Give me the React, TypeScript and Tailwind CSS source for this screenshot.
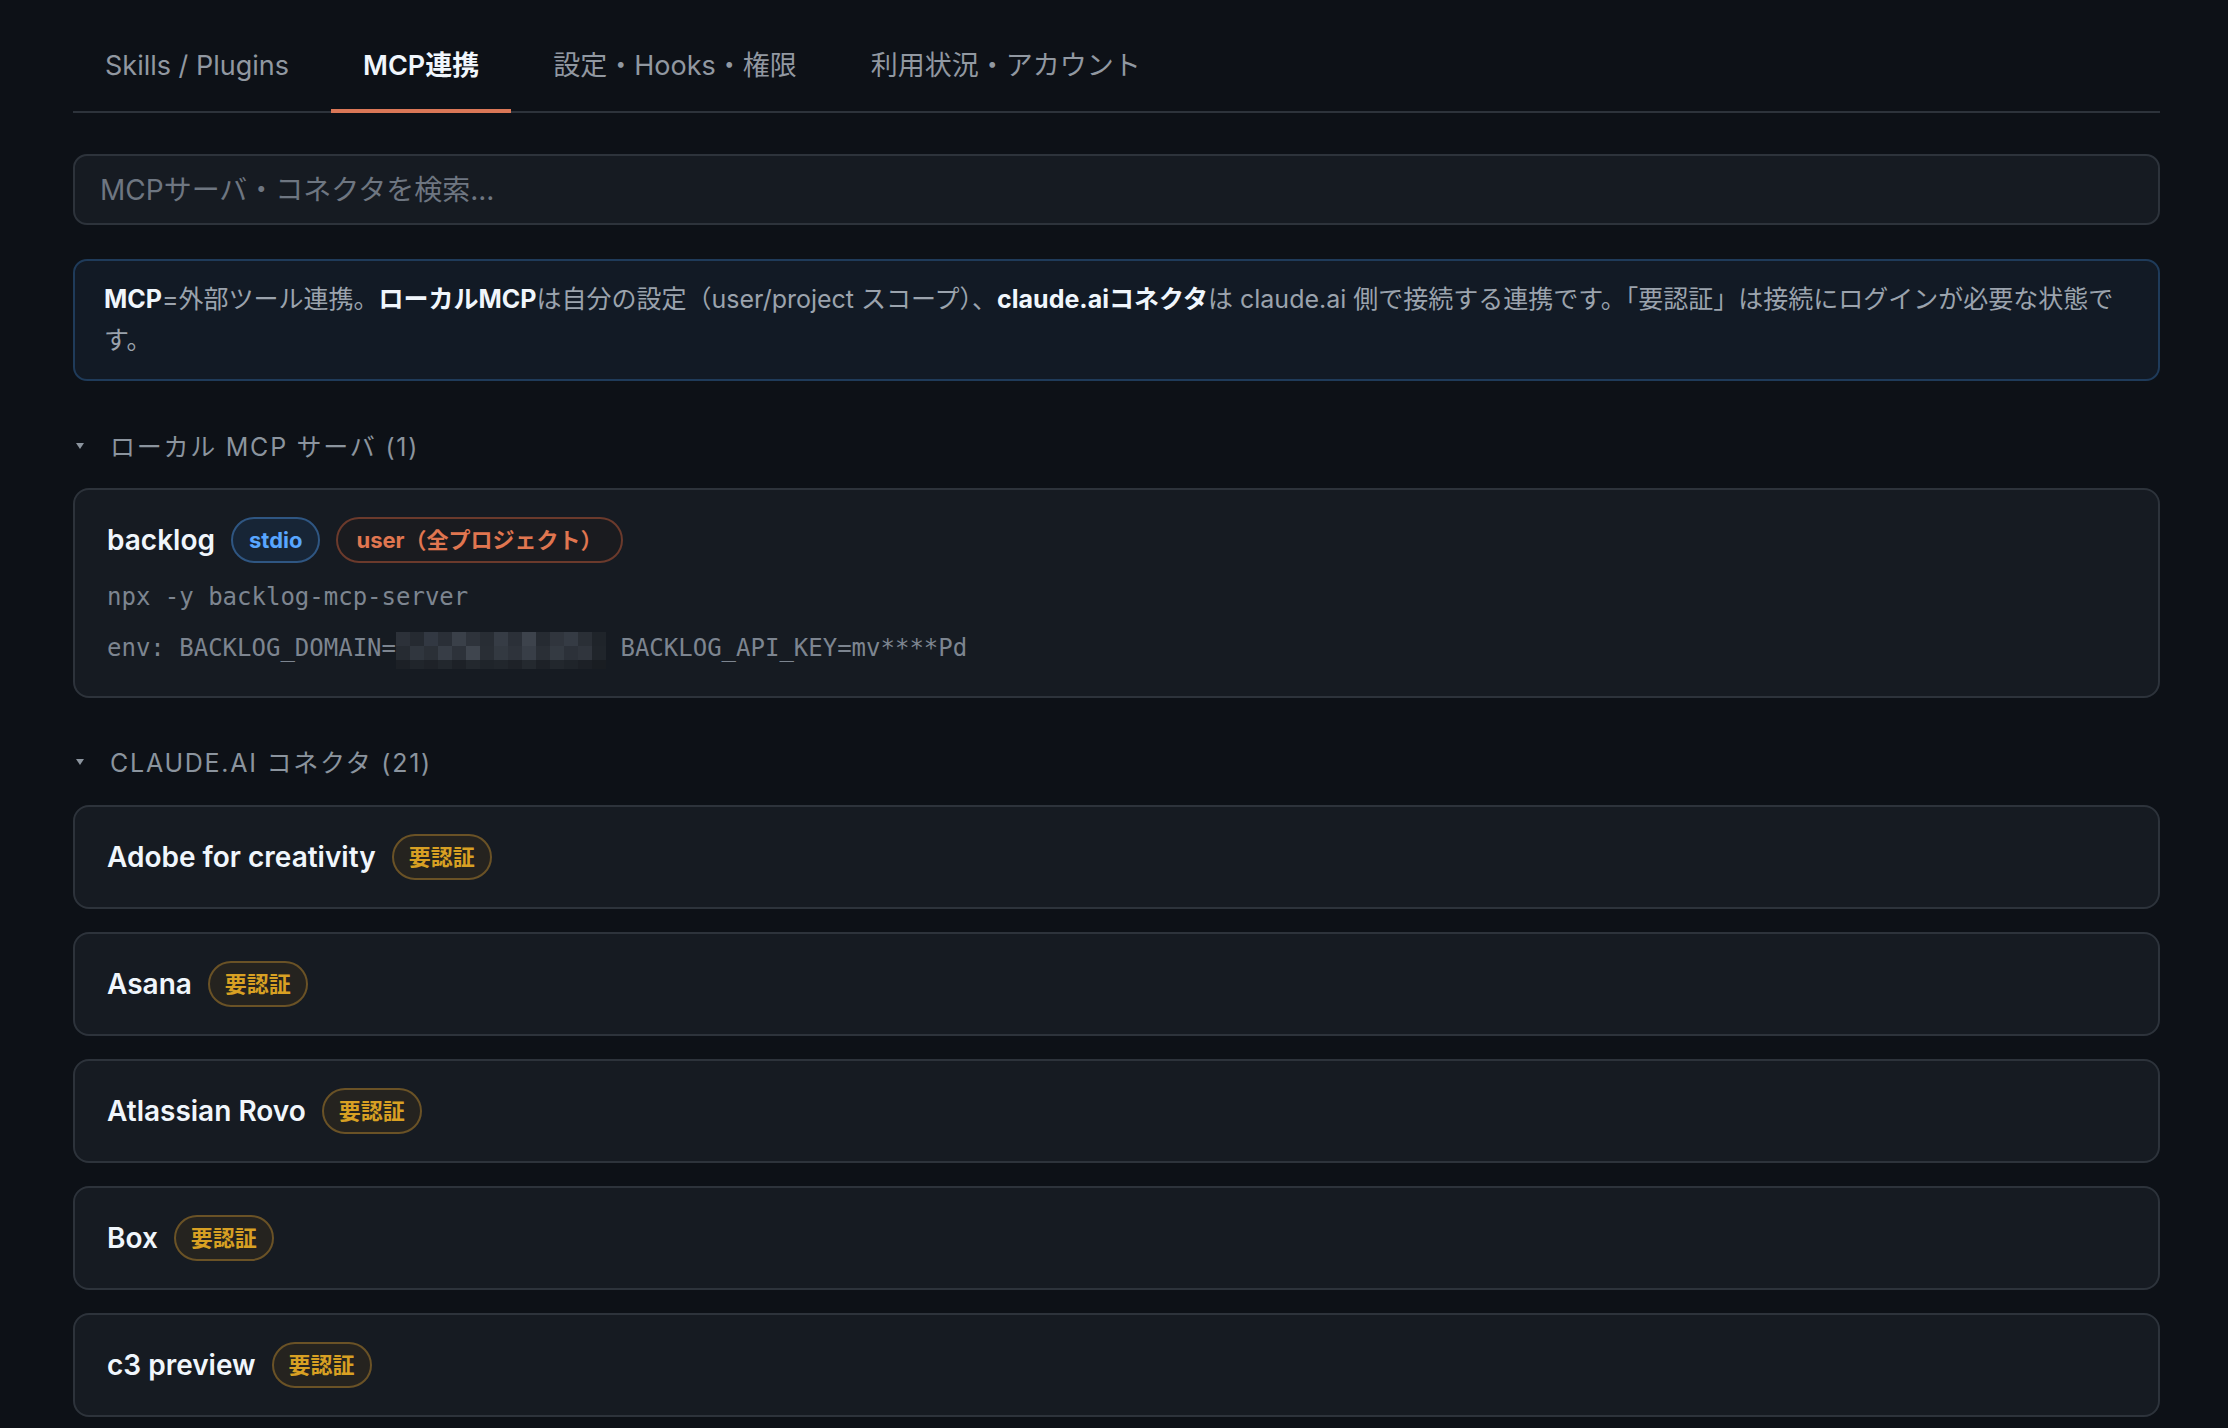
import React from 'react';

const FONT = '"Inter", "Noto Sans CJK JP", sans-serif';
const MONO = '"DejaVu Sans Mono", "Liberation Mono", "Noto Sans CJK JP", monospace';

const TABS = ['Skills / Plugins', 'MCP連携', '設定・Hooks・権限', '利用状況・アカウント'];

const CONNECTORS = ['Adobe for creativity', 'Asana', 'Atlassian Rovo', 'Box', 'c3 preview'];

// pixelated blur over the masked domain value
const MOSAIC = [
  '#2c3139', '#252a31', '#323842', '#2a2f37', '#3a4049', '#2e333b', '#282d34', '#363c45', '#2b3038', '#3d434c', '#262b32', '#30353d', '#353b44', '#2a2f36', '#1f242a',
  '#262b32', '#30363e', '#2b3037', '#373d46', '#2d323a', '#3f454e', '#292e35', '#333941', '#2e333b', '#383e47', '#2a2f36', '#343a42', '#2c3139', '#30353d', '#20252b',
  '#1c2026', '#20252b', '#1e2228', '#22272d', '#1d2127', '#23282e', '#1f242a', '#21262c', '#1e2228', '#24292f', '#1d2127', '#22272d', '#1f242a', '#1c2026', '#191d22',
];

const Caret = () => <span className="inline-block w-0 h-0 border-l-[4px] border-r-[4px] border-t-[6px] border-l-transparent border-r-transparent border-t-[#8b949e] mr-[26px] mb-[2px]" />;

const SectionHeader = ({ label }: { label: string }) => (
  <div className="flex items-center pl-[3px] text-[25px] leading-[36px] tracking-[0.07em] text-[#8b949e]">
    <Caret />
    <span>{label}</span>
  </div>
);

const AuthBadge = () => (
  <span className="inline-flex items-center h-[46px] px-[15px] rounded-full border-2 border-[#6a5226] bg-[#25231f] text-[#d8a023] text-[22px] font-bold">要認証</span>
);

export default function App() {
  return (
    <div className="min-h-screen bg-[#0d1117] pl-[73px] pr-[68px] pt-[17px] pb-[40px]" style={{ fontFamily: FONT }}>
      {/* Tabs */}
      <nav className="flex gap-[10px] border-b-2 border-[#2d333b]">
        {TABS.map((t, i) => (
          <button
            key={t}
            className={
              'px-[32px] pt-[31px] pb-[25px] leading-[36px] text-[27px] border-b-4 -mb-[2px] ' +
              (i === 1 ? 'border-[#d97757] text-[#f0f6fc] font-semibold' : 'border-transparent text-[#9198a1]')
            }
          >
            {t}
          </button>
        ))}
      </nav>

      {/* Search */}
      <input
        type="text"
        placeholder="MCPサーバ・コネクタを検索..."
        className="mt-[41px] w-full h-[71px] bg-[#161b22] border-2 border-[#2d333b] rounded-[14px] pl-[25px] text-[28px] text-white placeholder-[#6e7681] outline-none"
        style={{ fontFamily: FONT }}
      />

      {/* Info */}
      <p className="mt-[34px] bg-[#121a25] border-2 border-[#1f3b5a] rounded-[14px] px-[29px] py-[18px] text-[25px] leading-[41px] text-[#9ba3ad]">
        <b className="text-[#f0f6fc] font-bold">MCP</b>=外部ツール連携。<b className="text-[#f0f6fc] font-bold">ローカルMCP</b>は自分の設定（user/project スコープ）、<b className="text-[#f0f6fc] font-bold">claude.aiコネクタ</b>は claude.ai 側で接続する連携です。「要認証」は接続にログインが必要な状態です。
      </p>

      {/* Local MCP */}
      <div className="mt-[48px]">
        <SectionHeader label="ローカル MCP サーバ (1)" />
      </div>
      <div className="mt-[23px] bg-[#161b22] border-2 border-[#2d333b] rounded-[16px] px-[32px] pt-[27px] pb-[27px]">
        <div className="flex items-center gap-[16px]">
          <span className="text-[28px] font-semibold text-[#f0f6fc]">backlog</span>
          <span className="inline-flex items-center h-[46px] px-[16px] rounded-full border-2 border-[#2f5682] bg-[#172536] text-[#58a6ff] text-[22px] font-bold">stdio</span>
          <span className="inline-flex items-center h-[46px] px-[18px] rounded-full border-2 border-[#6b3a2c] bg-[#1a1b1f] text-[#e07650] text-[22px] font-bold">user（全プロジェクト）</span>
        </div>
        <div className="mt-[16px] text-[24px] leading-[36px] text-[#7d8590]" style={{ fontFamily: MONO }}>npx -y backlog-mcp-server</div>
        <div className="mt-[11px] flex items-center text-[24px] leading-[36px] text-[#7d8590] whitespace-pre" style={{ fontFamily: MONO }}>
          <span>env: BACKLOG_DOMAIN=</span>
          <span className="grid grid-cols-[repeat(15,14px)] grid-rows-[14px_14px_9px] w-[210px] mt-[6px]">
            {MOSAIC.map((c, i) => (
              <span key={i} style={{ backgroundColor: c }} />
            ))}
          </span>
          <span> BACKLOG_API_KEY=mv****Pd</span>
        </div>
      </div>

      {/* claude.ai connectors */}
      <div className="mt-[47px]">
        <SectionHeader label="CLAUDE.AI コネクタ (21)" />
      </div>
      <div className="mt-[24px] flex flex-col gap-[23px]">
        {CONNECTORS.map((name) => (
          <div key={name} className="bg-[#161b22] border-2 border-[#2d333b] rounded-[16px] px-[32px] py-[27px] flex items-center gap-[16px]">
            <span className="text-[28px] font-semibold text-[#f0f6fc]">{name}</span>
            <AuthBadge />
          </div>
        ))}
      </div>
    </div>
  );
}
